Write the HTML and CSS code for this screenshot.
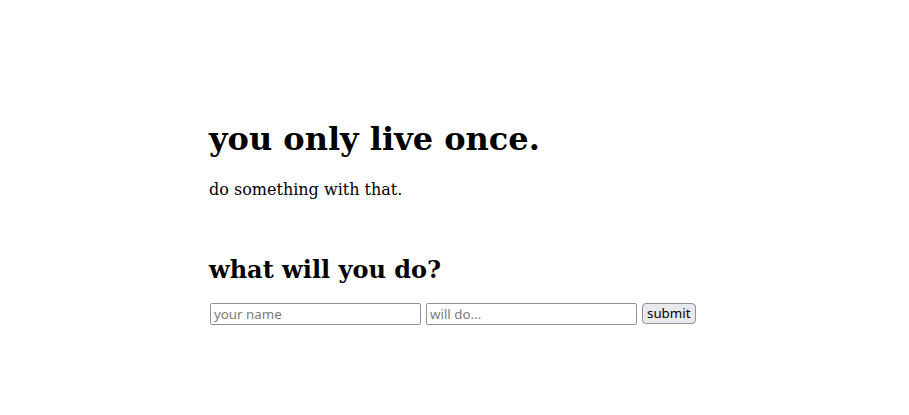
FILE: index.html
```html
<!DOCTYPE html>
<html>
<head>
<meta charset="utf-8">
<link rel="stylesheet" href="styles.css">
</head>
<body>
<main class="page">
  <h1 class="title">you only live once.</h1>
  <p class="lead">do something with that.</p>
  <h2 class="question">what will you do?</h2>
  <form class="entry">
    <input class="field" type="text" placeholder="your name">
    <input class="field" type="text" placeholder="will do...">
    <button class="submit" type="button">submit</button>
  </form>
</main>
</body>
</html>
```
FILE: styles.css
```css
body {
  margin: 8px;
  font-family: "DejaVu Serif", serif;
}
.page {
  padding: 91px 0 0 201px;
}
.title {
  font-size: 32px;
}
.lead {
  font-size: 16px;
}
.question {
  margin-top: 56px;
  margin-bottom: 19px;
  font-size: 24px;
}
.entry {
  display: flex;
  align-items: flex-start;
  gap: 5px;
  padding-left: 1px;
}
.field {
  box-sizing: border-box;
  width: 211px;
  height: 22px;
  margin: 0;
  padding: 1px 3px;
  border: 1px solid #8f8f9d;
  border-radius: 2px;
  background: #fff;
  color: #000;
  font-family: "Noto Sans", sans-serif;
  font-size: 13.33px;
}
.field::placeholder {
  color: #7a7a7a;
}
.submit {
  box-sizing: border-box;
  height: 21px;
  margin: 0;
  padding: 0 4px;
  border: 1px solid #8f8f9d;
  border-radius: 4px;
  background: #e9e9ed;
  color: #000;
  font-family: "Noto Sans", sans-serif;
  font-size: 13.33px;
  line-height: 17px;
}
```
